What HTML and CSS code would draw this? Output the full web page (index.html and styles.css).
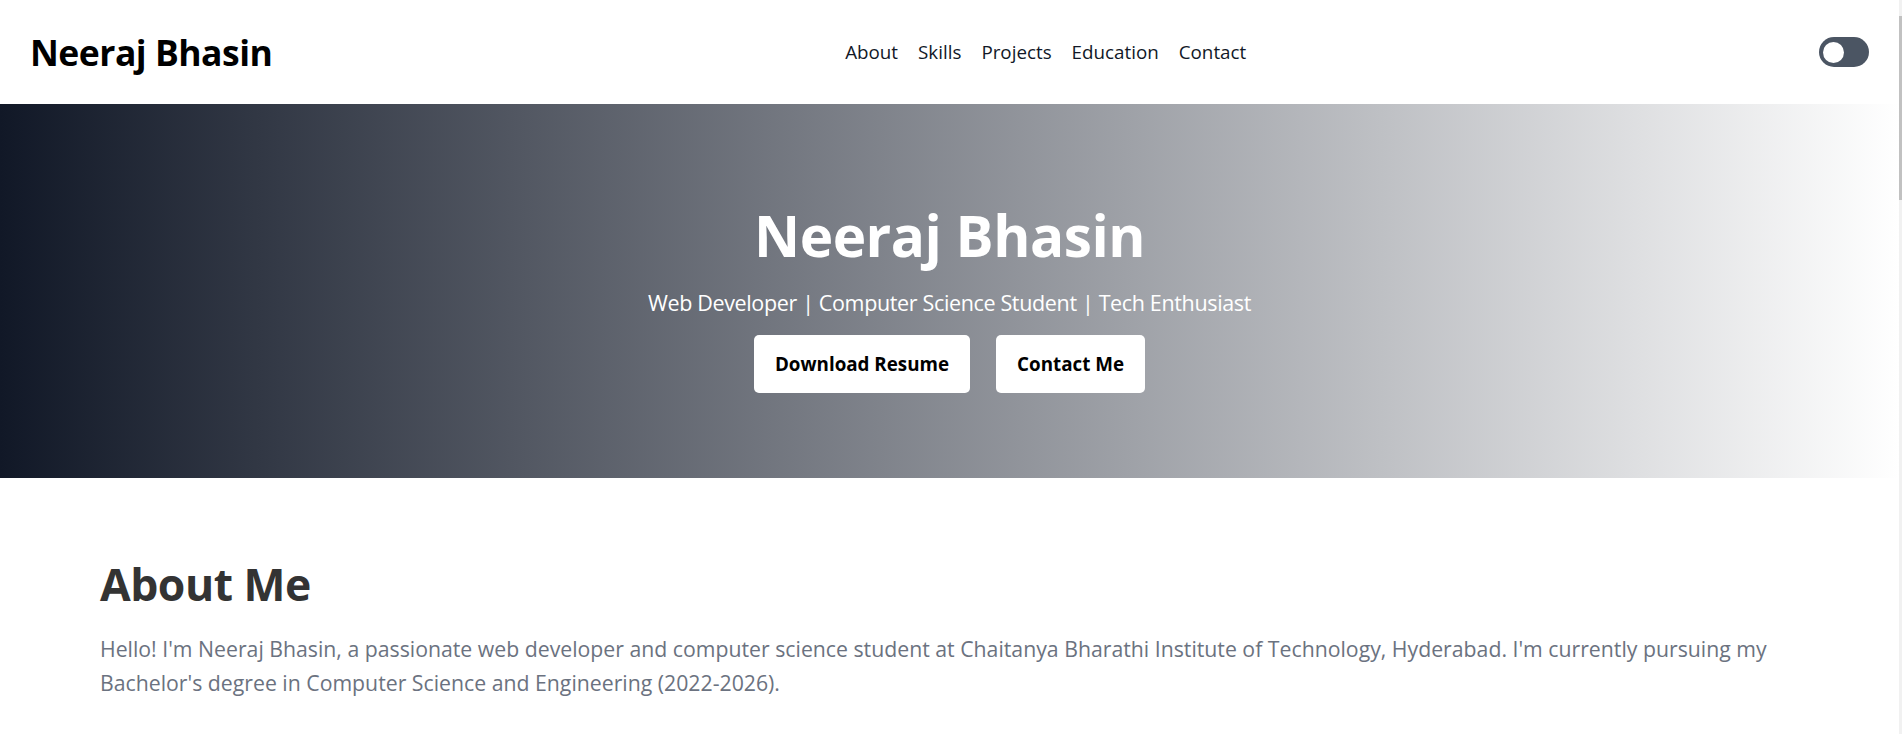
FILE: index.html
```html
<!DOCTYPE html>
<html lang="en">
<head>
<meta charset="utf-8">
<title>Neeraj Bhasin | Portfolio</title>
<link rel="stylesheet" href="styles.css">
</head>
<body>
<header class="site-header">
  <a class="logo" href="#">Neeraj Bhasin</a>
  <nav class="main-nav">
    <a href="#about">About</a>
    <a href="#skills">Skills</a>
    <a href="#projects">Projects</a>
    <a href="#education">Education</a>
    <a href="#contact">Contact</a>
  </nav>
  <button class="theme-toggle" aria-label="Toggle dark mode"><span class="knob"></span></button>
</header>

<section class="hero">
  <h1 class="hero-title">Neeraj Bhasin</h1>
  <p class="hero-subtitle">Web Developer | Computer Science Student | Tech Enthusiast</p>
  <div class="hero-actions">
    <a class="btn" href="#">Download Resume</a>
    <a class="btn" href="#contact">Contact Me</a>
  </div>
</section>

<main>
  <section class="section" id="about">
    <h2 class="section-title">About Me</h2>
    <p class="section-text">Hello! I'm Neeraj Bhasin, a passionate web developer and computer science student at Chaitanya Bharathi Institute of Technology, Hyderabad. I'm currently pursuing my Bachelor's degree in Computer Science and Engineering (2022-2026).</p>
  </section>

  <section class="section section-tall" id="skills">
    <h2 class="section-title">Skills</h2>
    <ul class="tag-list">
      <li>HTML</li><li>CSS</li><li>JavaScript</li><li>React</li><li>Node.js</li><li>Python</li><li>Java</li><li>SQL</li><li>Git</li>
    </ul>
  </section>

  <section class="section section-tall" id="projects">
    <h2 class="section-title">Projects</h2>
    <p class="section-text">A selection of web applications and academic projects.</p>
  </section>

  <section class="section section-tall" id="education">
    <h2 class="section-title">Education</h2>
    <p class="section-text">B.E. in Computer Science and Engineering, Chaitanya Bharathi Institute of Technology, Hyderabad (2022-2026)</p>
  </section>

  <section class="section section-tall" id="contact">
    <h2 class="section-title">Contact</h2>
    <p class="section-text">Feel free to reach out for collaborations or just a friendly hello.</p>
  </section>
</main>

<div class="scrollbar" aria-hidden="true"><div class="scrollbar-thumb"></div></div>
</body>
</html>
```

FILE: styles.css
```css
* { box-sizing: border-box; }

html { background: #fff; }

body {
  margin: 0;
  padding-right: 3px;
  font-family: "Open Sans", "Noto Sans", sans-serif;
  color: #1f2937;
  background: #fff;
}

a { text-decoration: none; color: inherit; }

.scrollbar {
  position: fixed;
  top: 0;
  right: 0;
  width: 3px;
  height: 100vh;
  background: #f1f1f1;
}

.scrollbar-thumb {
  margin-top: 16px;
  height: 184px;
  background: #c1c1c1;
}

.site-header {
  height: 104px;
  display: flex;
  align-items: center;
  justify-content: space-between;
  padding: 0 30px;
  background: #fff;
}

.logo {
  font-size: 35.5px;
  font-weight: 700;
  color: #000;
  letter-spacing: -0.5px;
}

.main-nav {
  display: flex;
  gap: 20px;
}

.main-nav a {
  font-size: 18.8px;
  color: #111827;
}

.theme-toggle {
  width: 50px;
  height: 30px;
  border: none;
  border-radius: 15px;
  background: #4b5563;
  padding: 0 4px;
  display: flex;
  align-items: center;
  cursor: pointer;
}

.knob {
  width: 21px;
  height: 21px;
  border-radius: 50%;
  background: #fff;
}

.hero {
  background: linear-gradient(to right, #111827, #ffffff);
  height: 374px;
  padding-top: 101px;
  display: flex;
  flex-direction: column;
  align-items: center;
  color: #fff;
}

.hero-title {
  margin: 0 0 20px;
  font-size: 56.7px;
  line-height: 60px;
  font-weight: 700;
  letter-spacing: -0.5px;
}

.hero-subtitle {
  margin: 0 0 15px;
  font-size: 21.5px;
  line-height: 35px;
  letter-spacing: -0.35px;
}

.hero-actions {
  display: flex;
  gap: 26px;
}

.btn {
  background: #fff;
  color: #000;
  font-weight: 700;
  font-size: 18.8px;
  line-height: 30px;
  padding: 14px 21px;
  border-radius: 5px;
}

.section {
  padding: 80px 100px;
}

.section-tall {
  min-height: 553px;
}

.section-title {
  margin: 0 0 22px;
  font-size: 44.5px;
  line-height: 52px;
  font-weight: 700;
  color: #333;
  letter-spacing: -0.5px;
}

.section-text {
  margin: 0;
  font-size: 21.25px;
  line-height: 34px;
  color: #6b7280;
}

.tag-list {
  list-style: none;
  margin: 0;
  padding: 0;
  display: flex;
  flex-wrap: wrap;
  gap: 12px;
}

.tag-list li {
  padding: 8px 16px;
  border-radius: 5px;
  background: #f3f4f6;
  color: #374151;
  font-size: 18px;
}
```
